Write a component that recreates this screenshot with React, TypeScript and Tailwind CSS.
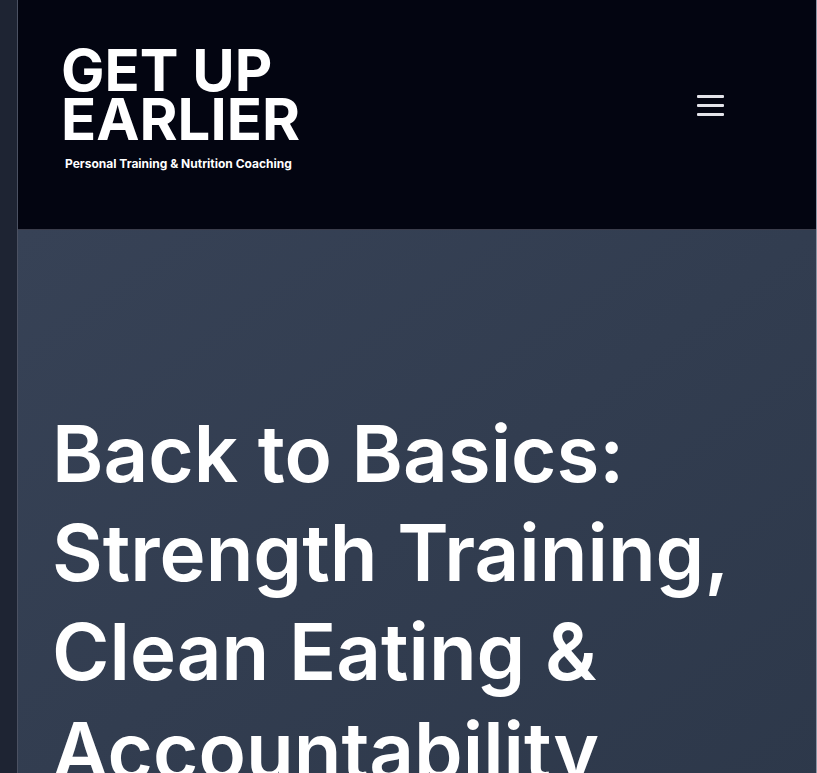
function Logo() {
  return (
    <a href="#home" className="block whitespace-nowrap text-white">
      <span className="block text-[58px] leading-[49px] font-bold">
        GET UP
        <br />
        EARLIER
      </span>
      <span className="mt-2 block pl-1 text-[12px] leading-6 font-bold">
        Personal Training &amp; Nutrition Coaching
      </span>
    </a>
  );
}

function MenuButton() {
  return (
    <button type="button" aria-label="Open menu" className="flex w-[27px] flex-col gap-[6px] py-2">
      <span className="h-[3px] w-full rounded-[1px] bg-[#e4e4ea]" />
      <span className="h-[3px] w-full rounded-[1px] bg-[#e4e4ea]" />
      <span className="h-[3px] w-full rounded-[1px] bg-[#e4e4ea]" />
    </button>
  );
}

export default function App() {
  return (
    <div className="h-screen overflow-hidden bg-[#1e2433] pl-[17px] font-['Inter','Open_Sans',sans-serif]">
      <div className="flex h-full flex-col border-x border-l-[#4b5162] border-r-[#8d95a5]">
        <header className="flex items-center justify-between border-b border-b-[#3b3d4b] bg-[#030511] pt-[46px] pr-[92px] pb-[53px] pl-[43px]">
          <Logo />
          <div className="pb-3">
            <MenuButton />
          </div>
        </header>
        <main className="grow bg-linear-to-br from-[#374256] to-[#2d384a] px-[34px] pt-[174px]">
          <h1 className="max-w-[720px] text-[78px] leading-[99px] font-semibold text-white">
            Back to Basics: Strength Training, Clean Eating &amp; Accountability
          </h1>
        </main>
      </div>
    </div>
  );
}
